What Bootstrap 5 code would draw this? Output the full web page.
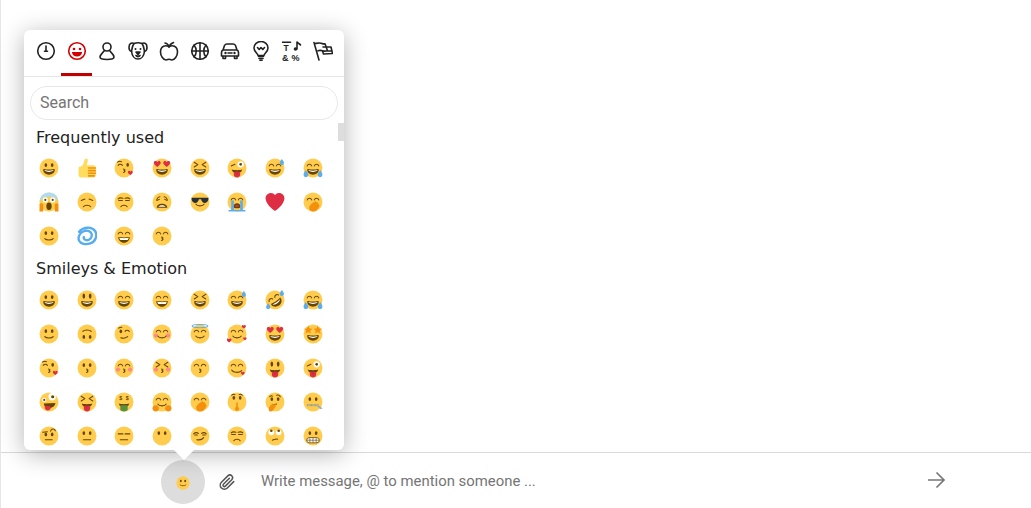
<!DOCTYPE html>
<html lang="en">

<head>
    <meta charset="UTF-8">
    <meta name="viewport" content="width=device-width, initial-scale=1">
    <title>Chat</title>
    <link href="https://cdn.jsdelivr.net/npm/bootstrap@5.3.3/dist/css/bootstrap.min.css" rel="stylesheet">
    <style>
        html, body { height: 100%; overflow: hidden; background: #fff; }
        body { font-family: Roboto, sans-serif; }
        .chat-page { height: 508px; border-left: 1px solid #e6e6e6; }
        .chat-bar { height: 56px; border-top: 1px solid #d9d9d9; padding-left: 160px; padding-right: 85px; }
        .smile-btn { width: 44px; height: 44px; background: #ddd; border: 0; border-radius: 50%; padding: 0; margin-top: 7px; flex: none; }
        .smile-btn svg { width: 14px; height: 14px; display: block; margin: 1px auto 0; }
        .clip-btn { width: 44px; flex: none; padding-top: 16px; text-align: center; margin-right: 12px; }
        .msg-input { font-family: Roboto, sans-serif; font-size: 14.9px; color: #333; border: 0; outline: 0; flex: 1; height: 26px; margin-top: 15px; padding: 0; background: none; }
        .msg-input::placeholder { color: #757575; opacity: 1; }
        .send-btn { flex: none; padding-top: 14px; }

        .emoji-pop { position: absolute; left: 23px; top: 30px; width: 320px; height: 420px; background: #fff; border-radius: 6px; box-shadow: 0 4px 24px rgba(0, 0, 0, .3); }
        .emoji-pop::after { content: ""; position: absolute; left: 150px; top: 420px; border-left: 10px solid transparent; border-right: 10px solid transparent; border-top: 10px solid #fff; }
        .emoji-tabs { height: 47px; border-bottom: 1px solid #e6e6e6; padding-left: 6.5px; }
        .emoji-tab { position: relative; width: 30.75px; height: 46px; padding-top: 11px; text-align: center; color: #222; }
        .emoji-tab svg { width: 20px; height: 20px; display: inline-block; vertical-align: top; }
        .emoji-tab.on { color: #d00000; }
        .emoji-tab.on::after { content: ""; position: absolute; left: 0; right: 0; bottom: 0; height: 3px; background: #c00000; }
        .search-wrap { padding: 9px 6px 0; }
        .emoji-search { display: block; width: 308px; height: 34px; border: 1px solid #e8e8e8; border-radius: 17px; padding: 0 9px 1px; font-family: Roboto, sans-serif; font-size: 16px; outline: 0; }
        .emoji-search::placeholder { color: #757575; opacity: 1; }
        .emoji-scroll { position: relative; height: 330px; overflow: hidden; padding-left: 6px; }
        .emoji-scroll .thumb { position: absolute; right: 0; top: 3px; width: 6px; height: 18px; background: #ddd; }
        .sect-title { font-family: "DejaVu Sans", sans-serif; font-size: 16px; font-weight: 400; line-height: 18px; color: #222; padding-left: 6px; margin: 0; }
        .first-title { padding-top: 9px; height: 31px; box-sizing: content-box; }
        .emoji-grid { display: grid; grid-template-columns: repeat(8, 37.7px); grid-auto-rows: 34px; }
        .emoji-cell { display: flex; align-items: center; justify-content: center; }
        .emoji-cell svg { width: 20px; height: 20px; display: block; }
        .freq-grid { height: 102px; margin-bottom: 7px; margin-top: -9px; }
        .smiley-grid { margin-top: 5px; }
    </style>
</head>

<body>
    <div class="chat-page position-relative d-flex flex-column justify-content-end">
        <div class="chat-bar d-flex">
            <button class="smile-btn" type="button" id="smileBtn"></button>
            <div class="clip-btn">
                <svg width="18" height="18" viewBox="0 0 24 24" fill="none" stroke="#555" stroke-width="2" stroke-linecap="round">
                    <path d="M21 11.5l-8.6 8.6a5.5 5.5 0 0 1-7.8-7.8l8.8-8.8a3.7 3.7 0 0 1 5.2 5.2l-8.8 8.8a1.8 1.8 0 0 1-2.6-2.6l8-8" />
                </svg>
            </div>
            <input class="msg-input" type="text" placeholder="Write message, @ to mention someone ...">
            <div class="send-btn">
                <svg width="20" height="20" viewBox="0 0 20 20" fill="none" stroke="#777" stroke-width="1.7">
                    <path d="M2 10h16M10.5 2.500l7.500 7.500-7.500 7.500" />
                </svg>
            </div>
        </div>

        <div class="emoji-pop">
            <div class="emoji-tabs d-flex" id="tabs"></div>
            <div class="search-wrap">
                <input class="emoji-search" type="text" placeholder="Search">
            </div>
            <div class="emoji-scroll">
                <div class="thumb"></div>
                <h6 class="sect-title first-title">Frequently used</h6>
                <div class="emoji-grid freq-grid" id="freq"></div>
                <h6 class="sect-title">Smileys &amp; Emotion</h6>
                <div class="emoji-grid smiley-grid" id="smileys"></div>
            </div>
        </div>
    </div>

    <script>
        // emoji bits, 36x36 box
        const D = "#664500", R = "#DD2E44", B = "#5DADEC", O = "#F4900C";
        const face = '<circle cx="18" cy="18" r="18" fill="#FFCC4D"/>';
        const line = (d, w) => `<path d="${d}" fill="none" stroke="${D}" stroke-width="${w || 2}" stroke-linecap="round" stroke-linejoin="round"/>`;
        const eyes = '<ellipse cx="12" cy="12.500" rx="2.500" ry="3.500" fill="' + D + '"/><ellipse cx="24" cy="12.500" rx="2.500" ry="3.500" fill="' + D + '"/>';
        const tallEyes = '<ellipse cx="12" cy="10.500" rx="2.500" ry="5" fill="' + D + '"/><ellipse cx="24" cy="10.500" rx="2.500" ry="5" fill="' + D + '"/>';
        const arcEyes = line("M7 14c1.500-4 7-4 8.500 0M20.500 14c1.500-4 7-4 8.500 0");
        const xEyes = line("M7 7l7 4.500-7 4.500M29 7l-7 4.500 7 4.500");
        const grin = `<path d="M18 21c-3.600 0-6-.4-9-1-.7-.1-2 0-2 2 0 4 4.600 9 11 9s11-5 11-9c0-2-1.300-2.100-2-2-3 .6-5.400 1-9 1z" fill="${D}"/><path d="M9 22s3 1 9 1 9-1 9-1-2 3.500-9 3.500S9 22 9 22z" fill="#fff"/>`;
        const smile = line("M10 22c2.500 4.500 13.500 4.500 16 0");
        const kiss = line("M17 20c3 .5 4 2 1 3 3 1 2 3-1 3.500");
        const tongue = `<path d="M12 25h12v5a6 6 0 0 1-12 0z" fill="${R}"/><path d="M18 25v6" stroke="#BB1A34"/>`;
        const tmouth = `<path d="M8 21c3 1.500 17 1.500 20 0-1 5-5 7-10 7s-9-2-10-7z" fill="${D}"/>`;
        const heart = (x, y, s) => `<path transform="translate(${x} ${y}) scale(${s})" d="M0-3c-1-3-5.500-3-6.500 0-.8 3 2.500 6 6.500 9 4-3 7.300-6 6.500-9C5.500-6 1-6 0-3z" fill="${R}"/>`;
        const drop = (x, y) => `<path d="M${x} ${y - 7}c2 3 4 5 4 7.500a4 4 0 0 1-8 0c0-2.500 2-4.500 4-7.500z" fill="${B}"/>`;
        const tears = `<path d="M4 22c-2 4-4 6-4 9a4.500 4.500 0 0 0 9 0c0-3-3-6-5-9zM32 22c2 4 4 6 4 9a4.500 4.500 0 0 1-9 0c0-3 3-6 5-9z" fill="${B}"/>`;
        const blush = '<circle cx="6.500" cy="21" r="4" fill="#FF7892" opacity=".8"/><circle cx="29.500" cy="21" r="4" fill="#FF7892" opacity=".8"/>';
        const hand = `<g transform="translate(7 0)"><path d="M11 36c-5 0-8-4-7-9 1-4 7-8 11-10 2-1 3 1 2 2 2-1 4 0 3 2 2-.5 3 1 2 2.500 1.500 0 2 2 1 3-3 6-7 10-12 9.500z" fill="${O}"/></g>`;

        const emoji = {
            grinning: face + eyes + grin,
            smiley: face + tallEyes + grin,
            smile: face + arcEyes + grin,
            grin: face + arcEyes + `<path d="M7 20c3 1 19 1 22 0 0 6-5 11-11 11S7 26 7 20z" fill="${D}"/><path d="M9 21.500c4 1 14 1 18 0-.5 2-1 3-1.500 3.500-3 1-12 1-15 0-.5-.5-1-1.500-1.500-3.500z" fill="#fff"/>`,
            laughing: face + xEyes + grin,
            sweatsmile: face + arcEyes + grin + drop(31, 8),
            joy: face + arcEyes + grin + tears,
            rofl: `<g transform="rotate(-35 18 18)">${face}${arcEyes}${grin}</g>` + drop(5, 31) + drop(31, 6),
            slight: face + eyes + line("M10 23c2.500 3.500 13.500 3.500 16 0"),
            upside: `<g transform="rotate(180 18 18)">${face}${eyes}${line("M10 23c2.500 3.500 13.500 3.500 16 0")}</g>`,
            wink: face + '<ellipse cx="12" cy="13" rx="2.500" ry="3.500" fill="' + D + '"/>' + line("M20 13c2-3 6-3 8 0M8 7c2-2 4-2 6-2") + line("M12 25c5 2 9 1 13-2"),
            blush: face + blush + arcEyes + smile,
            halo: face + arcEyes + smile + `<ellipse cx="18" cy="3" rx="15" ry="3" fill="none" stroke="${B}" stroke-width="2"/>`,
            hearts: face + arcEyes + smile + heart(31, 4, .6) + heart(3, 30, .7) + heart(33, 27, .5),
            hearteyes: face + grin + heart(9, 10, 1) + heart(27, 10, 1),
            star: face + grin + `<path d="M9 2l2.300 5.500 6 .4-4.600 3.800 1.500 5.800L9 14.300 3.800 17.500l1.500-5.800L.7 7.900l6-.4z" fill="${O}"/><path transform="translate(18)" d="M9 2l2.300 5.500 6 .4-4.600 3.800 1.500 5.800L9 14.300 3.800 17.500l1.500-5.800L.7 7.900l6-.4z" fill="${O}"/>`,
            kissheart: face + '<ellipse cx="25" cy="12" rx="2.500" ry="3.500" fill="' + D + '"/>' + line("M7 13c2-3 6-3 8 0M6 7c2-2 5-2 7-1") + kiss + heart(30, 27, .7),
            kissing: face + eyes + kiss,
            kissblush: face + blush + arcEyes + kiss,
            kissblush2: face + blush + xEyes + kiss,
            kisssmile: face + arcEyes + kiss,
            yum: face + arcEyes + line("M8 22c3 5 13 6 19 1") + heart(29, 28, .55),
            tongue: face + tallEyes + tmouth + tongue,
            winktongue: face + line("M7 14l7-3") + '<circle cx="25" cy="11" r="6" fill="#fff"/><circle cx="25" cy="11" r="2.500" fill="' + D + '"/>' + tmouth + tongue,
            zany: face + '<circle cx="24" cy="8" r="7" fill="#fff"/><circle cx="25" cy="8" r="3" fill="' + D + '"/><circle cx="9" cy="14" r="4" fill="#fff"/><circle cx="9" cy="14" r="2" fill="' + D + '"/>' + `<path d="M8 21l22-1c0 5-5 9-11 10-6 1-10-3-11-9z" fill="${D}"/><path d="M10 25l11 1v5a6 6 0 0 1-11-1z" fill="${R}"/>`,
            squinttongue: face + xEyes + tmouth + tongue,
            money: face + `<text x="12" y="14" font-size="10" font-family="Liberation Sans, sans-serif" font-weight="700" fill="#664500" text-anchor="middle">$</text><text x="24" y="14" font-size="10" font-family="Liberation Sans, sans-serif" font-weight="700" fill="#664500" text-anchor="middle">$</text>` + tmouth + `<path d="M11 24h14v8a7 4 0 0 1-14 0z" fill="#5C913B"/>`,
            hug: face + arcEyes + smile + `<ellipse cx="6" cy="30" rx="6" ry="6" fill="${O}"/><ellipse cx="30" cy="30" rx="6" ry="6" fill="${O}"/>`,
            handmouth: face + arcEyes + hand,
            shush: face + eyes.replace(/12\.500/g, "10") + line("M8 5c2-2 5-2 6-1M22 4c2-1 4-1 6 1") + `<path d="M16.500 33V20a1.500 1.500 0 0 1 3 0v13z" fill="${O}"/><circle cx="18" cy="31" r="4" fill="${O}"/>`,
            think: face + eyes + line("M8 8c2-2 4-2 5-1M21 5c3-1 6 0 7 3M13 24l8-2") + `<path d="M8 36c-3-2-2-7 0-10l4-4c1-2 3-1 2 1l4-1c2 0 2 2 1 3 1 1 0 3-1 3-2 4-5 9-10 8z" fill="${O}"/>`,
            zipper: face + eyes + `<path d="M7 24h22" stroke="#8899A6" stroke-width="4" stroke-dasharray="1.500 1"/><path d="M28 24l8 6-3 2-7-5z" fill="#99AAB5"/>`,
            raisedbrow: face + eyes.replace(/12\.500/g, "15") + line("M6 11l9-1M21 9c1-5 7-6 9-1M11 25h13"),
            neutral: face + eyes + line("M11 25h14"),
            expressionless: face + line("M7 14h9M20 14h9M11 25h14"),
            nomouth: face + eyes,
            smirk: face + line("M6 14c3-3 6-3 9-1M21 13c3-2 6-2 9 1M8 16h5M23 16h5M12 25c5 1 10 0 13-4"),
            unamused: face + line("M7 12c2-2 6-2 9-1M20 11c3-1 7-1 9 1M8 15h7M21 15h7M12 27c2-4 10-4 12 0"),
            rolleyes: face + '<circle cx="11" cy="11" r="5.500" fill="#fff"/><circle cx="25" cy="11" r="5.500" fill="#fff"/><circle cx="11" cy="8" r="2.500" fill="' + D + '"/><circle cx="25" cy="8" r="2.500" fill="' + D + '"/>' + line("M13 26c3-1 7-3 10-2"),
            grimace: face + eyes + `<rect x="6" y="21" width="24" height="10" rx="5" fill="#fff" stroke="${D}" stroke-width="1.500"/><path d="M6 26h24M12 21v10M18 21v10M24 21v10" stroke="${D}" stroke-width="1.200"/>`,
            disappointed: face + line("M7 15l7-2.500M29 15l-7-2.500M11 27c3-4 11-4 14 0"),
            weary: face + line("M8 13c2-4 4-5 6-5M28 13c-2-4-4-5-6-5M8 15l5-2M28 15l-5-2") + `<path d="M8 29c0-10 20-10 20 0z" fill="${D}"/><path d="M11 27c2-4 12-4 14 0z" fill="#fff"/>`,
            sunglasses: face + `<path d="M2 10h32v3c-1 5-4 7-7 7s-6-3-7-7h-4c-1 4-4 7-7 7s-6-2-7-7z" fill="#292F33"/>` + smile,
            sob: face + arcEyes + `<path d="M11 27c0-9 14-9 14 0 0 4-14 4-14 0z" fill="${D}"/><path d="M14 27a4 4 0 0 1 8 0z" fill="${R}"/><path d="M7 15h5v18H7zM24 15h5v18h-5z" fill="${B}"/><path d="M2 33h32v3H2z" fill="${B}"/>`,
            scream: face + `<path d="M18 0C8 0 0 8 0 18c4-8 10-10 18-10s14 2 18 10C36 8 28 0 18 0z" fill="#AEDCF5"/><circle cx="11" cy="14" r="5" fill="#fff"/><circle cx="25" cy="14" r="5" fill="#fff"/><circle cx="11" cy="14" r="2" fill="${D}"/><circle cx="25" cy="14" r="2" fill="${D}"/><ellipse cx="18" cy="26" rx="5" ry="7" fill="${D}"/><path d="M0 36V22c2-2 5-2 7 0v14zM36 36V22c-2-2-5-2-7 0v14z" fill="${O}"/>`,
            redheart: `<path d="M35.900 11.100C35.900 5.500 31.400 1 25.800 1 22.400 1 19.500 2.700 18 5.200 16.500 2.700 13.600 1 10.200 1 4.600 1 .1 5.500 .1 11.100c0 1 .1 1.800.4 2.700C2.500 24.800 16.200 34 18 35c1.800-1 15.500-10.200 17.500-21.200.3-.9.4-1.700.4-2.700z" fill="${R}"/>`,
            thumbsup: `<path d="M6 36c-2 0-4-2-4-4V18c0-2 2-3 4-3 3-1 5-4 6-8 .5-3 2-7 5-7s3 4 2 7l-1.500 6H30c3 0 5 2 5 5v13c0 3-2 5-5 5z" fill="#FFDC5D"/><path d="M21 18h13M21 23h13M21 28h13M21 33h11" stroke="${O}" stroke-width="3" stroke-linecap="round"/>`,
            cyclone: `<path d="M3 10C10 1 26-1 33 8c6 9 1 21-9 24-8 3-18 1-21-5-3-7 1-15 9-18 7-3 14 0 15 6 1 6-4 11-9 11-4 0-7-3-6-6" fill="none" stroke="#55ACEE" stroke-width="4.500" stroke-linecap="round"/>`
        };

        const svg = name => `<svg viewBox="-1 -1 38 38" aria-hidden="true">${emoji[name]}</svg>`;
        const fill = (id, names) => {
            document.getElementById(id).innerHTML = names.map(n => `<div class="emoji-cell">${svg(n)}</div>`).join("");
        };

        fill("freq", ["grinning", "thumbsup", "kissheart", "hearteyes", "laughing", "winktongue", "sweatsmile", "joy",
            "scream", "disappointed", "unamused", "weary", "sunglasses", "sob", "redheart", "handmouth",
            "slight", "cyclone", "grin", "kisssmile"]);
        fill("smileys", ["grinning", "smiley", "smile", "grin", "laughing", "sweatsmile", "rofl", "joy",
            "slight", "upside", "wink", "blush", "halo", "hearts", "hearteyes", "star",
            "kissheart", "kissing", "kissblush", "kissblush2", "kisssmile", "yum", "tongue", "winktongue",
            "zany", "squinttongue", "money", "hug", "handmouth", "shush", "think", "zipper",
            "raisedbrow", "neutral", "expressionless", "nomouth", "smirk", "unamused", "rolleyes", "grimace"]);
        document.getElementById("smileBtn").innerHTML = svg("slight");

        // category tabs, 20x20 box
        const symText = 'font-weight="700" font-family="Liberation Sans, sans-serif" fill="currentColor" stroke="none"';
        const tabs = [
            '<circle cx="10" cy="10" r="8.300"/><path d="M10 5v5M8.500 10.300h3"/>',
            '<circle cx="10" cy="10" r="8.300"/><circle cx="7" cy="8" r="1.300" fill="currentColor" stroke="none"/><circle cx="13" cy="8" r="1.300" fill="currentColor" stroke="none"/><path d="M4.800 11h10.400c-.4 3-2.600 4.500-5.200 4.500S5.200 14 4.800 11z" fill="currentColor" stroke="none"/>',
            '<circle cx="10" cy="6" r="4"/><path d="M7.500 9.500C6 11.500 3 13.500 3 16c0 2 2 2.500 7 2.500s7-.5 7-2.500c0-2.500-3-4.500-4.500-6.500"/>',
            '<path d="M6 2.500C3 1 1 3 1 6.500c0 2 1 3.500 2.500 4 .5 4 3 7.500 6.500 7.500s6-3.500 6.500-7.500C18 10 19 8.500 19 6.500c0-3.500-2-5.500-5-4-2.500-1-5.500-1-8 0z"/><path d="M3.500 10.500C4 8 4 5 6 2.500M16.500 10.500C16 8 16 5 14 2.500"/><circle cx="7.500" cy="8" r="1" fill="currentColor" stroke="none"/><circle cx="12.500" cy="8" r="1" fill="currentColor" stroke="none"/><path d="M8 11h4l-2 2.500zM8 14.500c1 1.500 3 1.500 4 0" fill="currentColor"/>',
            '<path d="M10 6C7 3.500 1.500 5 1.500 11c0 4 3 8 5.500 8 1.500 0 2-.7 3-.7s1.500.7 3 .7c2.500 0 5.500-4 5.500-8 0-6-5.500-7.500-8.500-5z"/><path d="M10 6C9.500 4 8.500 2.500 6 2M10 6c.5-2 2-3.500 4.500-4.500"/>',
            '<circle cx="10" cy="10" r="8.300"/><path d="M10 1.700v16.600M1.700 10h16.600M4 4.200c3 3 3 8.600 0 11.600M16 4.200c-3 3-3 8.600 0 11.600"/>',
            '<path d="M3 9l1.500-4.500C5 3.500 6 3 7 3h6c1 0 2 .5 2.500 1.500L17 9M3 9c-1 .5-1.500 1.500-1.500 2.500V15h17v-3.500c0-1-.5-2-1.500-2.500zM3 15v2.500h2.500V15M14.500 15v2.500H17V15"/><circle cx="5.500" cy="12" r="1.200" fill="currentColor" stroke="none"/><circle cx="14.500" cy="12" r="1.200" fill="currentColor" stroke="none"/><path d="M8 12h4"/>',
            '<path d="M7 14.500c0-2-4-3.500-4-7.500a7 6.500 0 0 1 14 0c0 4-4 5.500-4 7.500z"/><path d="M7.500 15.500h5M8 17.500h4M9 19.300h2M6.500 6.500l1.700 2L10 6.500l1.800 2 1.700-2"/>',
            `<text x="1.500" y="9.500" font-size="8.500" ${symText}>T</text><path d="M.5 1.200h8" /><path d="M15 8V1c.8 1.500 2.500 1.500 3.500 3" /><circle cx="13.500" cy="8" r="1.800" fill="currentColor" stroke="none"/><text x="0" y="19.500" font-size="9" ${symText}>&amp;</text><text x="9.500" y="19.500" font-size="9" ${symText}>%</text>`,
            '<path d="M1 1.500L6 19M2 2.500c3-.5 5-1 7 0 1 .5 2 .5 3 .3l2.500 7c-2 .5-3.500.5-5 0-1.500-.5-3-.5-4.500 0M10 6h8l1.500 6.500-9 .5-1-3M14 10h5"/>'
        ];
        document.getElementById("tabs").innerHTML = tabs.map((t, i) =>
            `<div class="emoji-tab${i === 1 ? " on" : ""}"><svg viewBox="0 0 20 20" fill="none" stroke="currentColor" stroke-width="1.600" stroke-linejoin="round" stroke-linecap="round">${t}</svg></div>`
        ).join("");
    </script>
    <script src="https://cdn.jsdelivr.net/npm/bootstrap@5.3.3/dist/js/bootstrap.bundle.min.js"></script>
</body>

</html>
